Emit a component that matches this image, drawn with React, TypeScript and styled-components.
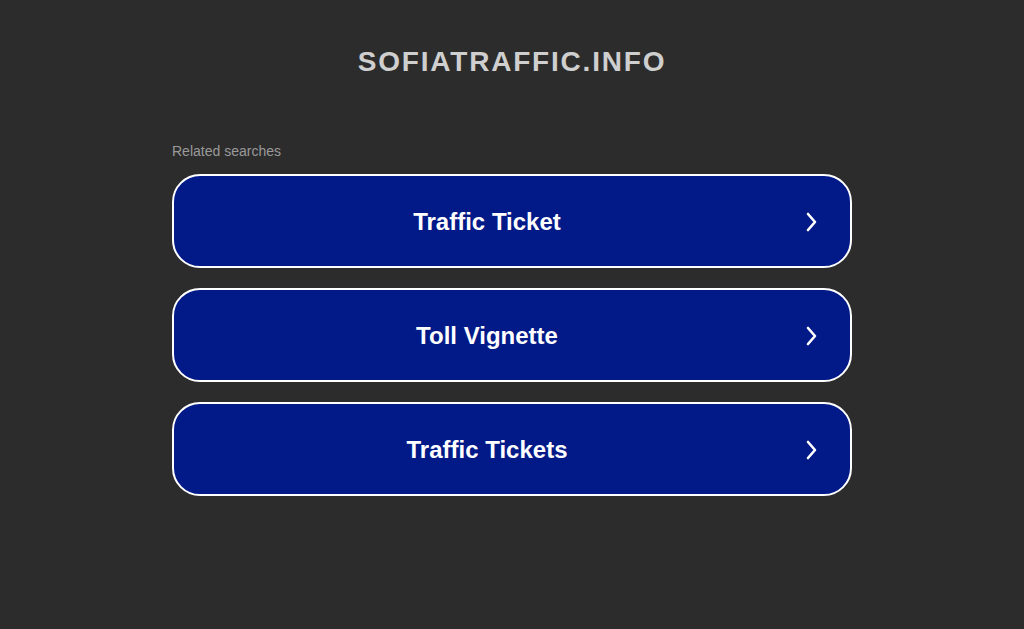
import React from "react";
import styled, { createGlobalStyle } from "styled-components";

const Global = createGlobalStyle`
  html, body { margin: 0; padding: 0; background: #2c2c2c; }
  body { font-family: "Liberation Sans", Arial, sans-serif; }
`;

const Page = styled.div`
  min-height: 629px;
  display: flex;
  flex-direction: column;
  align-items: center;
`;

const Title = styled.h1`
  margin: 45px 0 0;
  font-size: 28px;
  line-height: 34px;
  font-weight: 700;
  color: #cfcfcf;
  letter-spacing: 1.8px;
`;

const Content = styled.div`
  width: 680px;
  margin-top: 64px;
  display: flex;
  flex-direction: column;
`;

const Label = styled.div`
  font-size: 14px;
  line-height: 16px;
  color: #9a9a9a;
  margin-bottom: 15px;
`;

const List = styled.div`
  display: flex;
  flex-direction: column;
  gap: 20px;
`;

const Item = styled.a`
  box-sizing: border-box;
  height: 94px;
  border: 2px solid #ffffff;
  border-radius: 28px;
  background: #021a88;
  display: flex;
  align-items: center;
  padding: 2px 26px 0 0;
  color: #fff;
  text-decoration: none;
`;

const ItemText = styled.span`
  flex: 1;
  text-align: center;
  font-size: 24px;
  font-weight: 700;
`;

const Arrow = styled.svg`
  width: 24px;
  height: 24px;
  flex: none;
`;

const items = ["Traffic Ticket", "Toll Vignette", "Traffic Tickets"];

export default function App() {
  return (
    <Page>
      <Global />
      <Title>SOFIATRAFFIC.INFO</Title>
      <Content>
        <Label>Related searches</Label>
        <List>
          {items.map((t) => (
            <Item key={t} href="#">
              <ItemText>{t}</ItemText>
              <Arrow viewBox="0 0 24 24" fill="none" stroke="#fff" strokeWidth="2.6" strokeLinecap="round" strokeLinejoin="round">
                <path d="M8 4 L15 12 L8 20" />
              </Arrow>
            </Item>
          ))}
        </List>
      </Content>
    </Page>
  );
}
